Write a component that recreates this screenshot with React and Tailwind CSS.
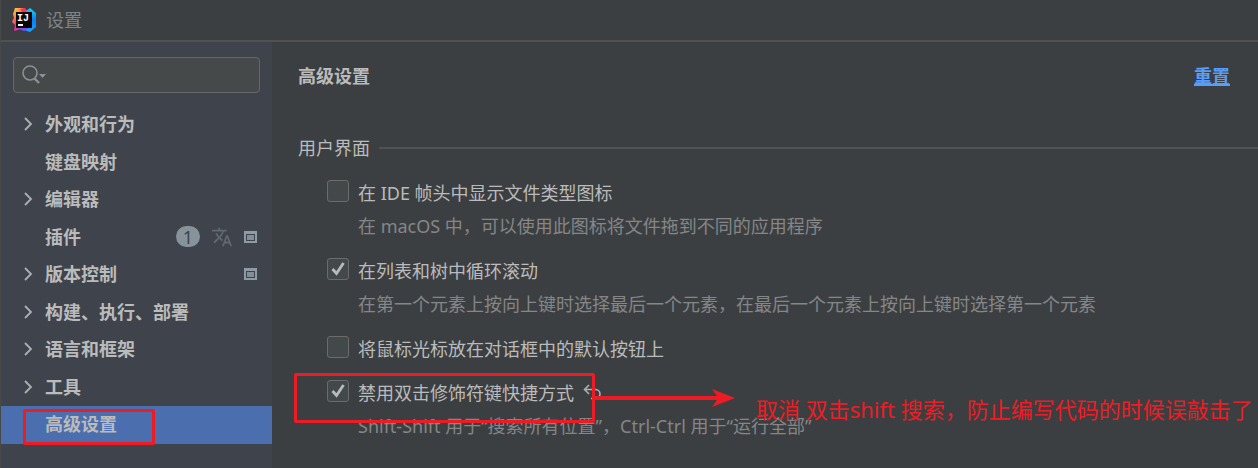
import React, { useState } from 'react';
import { MdTranslate } from 'react-icons/md';

const categories = [
  { name: '外观和行为', expandable: true },
  { name: '键盘映射' },
  { name: '编辑器', expandable: true },
  { name: '插件', updates: 1, translate: true, projectLevel: true },
  { name: '版本控制', expandable: true, projectLevel: true },
  { name: '构建、执行、部署', expandable: true },
  { name: '语言和框架', expandable: true },
  { name: '工具', expandable: true },
  { name: '高级设置', marked: true },
];

const options = [
  {
    id: 'frame-icon',
    label: '在 IDE 帧头中显示文件类型图标',
    hint: '在 macOS 中，可以使用此图标将文件拖到不同的应用程序',
  },
  {
    id: 'cyclic-scroll',
    label: '在列表和树中循环滚动',
    hint: '在第一个元素上按向上键时选择最后一个元素，在最后一个元素上按向上键时选择第一个元素',
  },
  { id: 'default-button', label: '将鼠标光标放在对话框中的默认按钮上' },
  {
    id: 'double-shift',
    label: '禁用双击修饰符键快捷方式',
    hint: 'Shift-Shift 用于“搜索所有位置”，Ctrl-Ctrl 用于“运行全部”',
    note: '取消 双击shift 搜索，防止编写代码的时候误敲击了',
  },
];

const Logo = () => (
  <svg width="24" height="24" viewBox="0 0 24 24" aria-hidden="true">
    <defs>
      <linearGradient id="warm" x1="0" y1="0" x2="0.6" y2="1">
        <stop offset="0" stopColor="#fdd835" />
        <stop offset="0.35" stopColor="#ff8a50" />
        <stop offset="0.65" stopColor="#fe2d78" />
        <stop offset="1" stopColor="#c33bd8" />
      </linearGradient>
      <linearGradient id="cool" x1="0" y1="0" x2="0" y2="1">
        <stop offset="0" stopColor="#14d4f4" />
        <stop offset="0.5" stopColor="#0b7cf5" />
        <stop offset="1" stopColor="#19a3ff" />
      </linearGradient>
    </defs>
    <path d="M3 0h8l3 4v16l-5 1-7 2 1-6-3-3 2-4-1-4z" fill="url(#warm)" />
    <path d="M8 1l5-1 3 4-4 3z" fill="#fe2d63" />
    <path d="M14 3l4-3 6 5v14l-6 5-9-3 7-3z" fill="url(#cool)" />
    <path d="M5 20l9-3 2 4-4 2z" fill="#7b4df5" />
    <rect x="4" y="4" width="16" height="16" fill="#0b0507" />
    <rect x="6" y="16" width="5" height="2" fill="#fff" />
    <text x="5" y="13" fill="#fff" fontFamily="Liberation Mono, monospace" fontWeight="700" fontSize="10">
      IJ
    </text>
  </svg>
);

const SearchIcon = () => (
  <svg width="26" height="20" viewBox="0 0 26 20" fill="none" aria-hidden="true">
    <circle cx="8" cy="8" r="7" stroke="#87929a" strokeWidth="1.6" />
    <path d="M12 13l5 5" stroke="#87929a" strokeWidth="2.4" />
    <path d="M17 9h7l-3.500 4z" fill="#87929a" />
  </svg>
);

const Chevron = () => (
  <svg width="9" height="14" viewBox="0 0 9 14" fill="none" aria-hidden="true">
    <path d="M1 1l6 6-6 6" stroke="#adb0b2" strokeWidth="1.8" />
  </svg>
);

const ProjectIcon = () => (
  <svg width="13" height="12" viewBox="0 0 13 12" aria-hidden="true">
    <path d="M0 0h13v12H0zM2 3v7h9V3z" fill="#8f9ba3" fillRule="evenodd" />
    <rect x="3" y="4" width="7" height="5" fill="#8f9ba3" opacity="0.85" />
  </svg>
);

const Category = ({ item, selected, onSelect }) => (
  <li className="relative h-[38px] even:h-[37px]">
    <button
      type="button"
      onClick={onSelect}
      className={`flex h-full w-full items-center pb-[2px] pl-[23px] pr-[15px] text-left font-bold ${
        selected ? 'bg-[#4b6eaf]' : ''
      }`}
    >
      <span className="w-[21px] shrink-0">{item.expandable && <Chevron />}</span>
      <span className="flex-1">{item.name}</span>
      <span className="flex items-center gap-[11px] font-normal">
        {item.updates && (
          <span className="flex h-[21px] w-6 items-center justify-center rounded-full bg-[#87939a] text-[#3f434c]">
            {item.updates}
          </span>
        )}
        {item.translate && <MdTranslate size={22} className="text-[#626970]" />}
        {item.projectLevel && <ProjectIcon />}
      </span>
    </button>
    {item.marked && (
      <span className="pointer-events-none absolute left-[22px] top-[3px] h-9 w-[132px] rounded-xs border-3 border-[#ed1c24]" />
    )}
  </li>
);

const Option = ({ option, checked, onToggle, onRevert }) => (
  <div className="relative">
    <div className="flex h-[34px] items-start pt-1">
      <span className="mr-[9px] grid size-[22px] shrink-0">
        <input
          id={option.id}
          type="checkbox"
          checked={checked}
          onChange={onToggle}
          className="col-start-1 row-start-1 size-[22px] appearance-none rounded-[3px] border border-[#6b6b6b] bg-[#43494a]"
        />
        {checked && (
          <svg viewBox="0 0 22 22" fill="none" className="pointer-events-none col-start-1 row-start-1 size-[22px]">
            <path d="M5.500 11l4 4.500L16.500 5" stroke="#b8bbbc" strokeWidth="2.800" />
          </svg>
        )}
      </span>
      <label htmlFor={option.id} className="whitespace-nowrap pt-px">
        {option.label}
      </label>
      {option.note && (
        <button type="button" aria-label="还原" onClick={onRevert} className="ml-[9px] mt-1">
          <svg width="20" height="16" viewBox="0 0 20 16" fill="none">
            <path d="M6 1L1.500 5.500 6 10M2 5.500h10.500a4.500 4.500 0 0 1 0 9H8" stroke="#adb0b2" strokeWidth="1.600" />
          </svg>
        </button>
      )}
    </div>
    {option.hint && (
      <p className="flex h-[34px] items-center whitespace-nowrap pb-[2px] pl-[31px] text-[#858687]">{option.hint}</p>
    )}
    {option.note && (
      <div className="pointer-events-none absolute -left-[33px] -top-[3px] flex items-start text-[#ed1c24]">
        <span className="h-[50px] w-[301px] shrink-0 rounded-xs border-3 border-[#ed1c24]" />
        <svg width="141" height="18" viewBox="0 0 141 18" fill="#ed1c24" className="mt-4 shrink-0">
          <path d="M0 7h122L117 0l23 9-23 9 5-7H0z" />
        </svg>
        <span className="ml-5 mt-5 whitespace-nowrap text-[22px] leading-8">{option.note}</span>
      </div>
    )}
  </div>
);

const defaults = { 'cyclic-scroll': true, 'double-shift': true };

const App = () => {
  const [selected, setSelected] = useState('高级设置');
  const [values, setValues] = useState(defaults);

  const toggle = (id) => setValues((prev) => ({ ...prev, [id]: !prev[id] }));

  return (
    <div className="flex min-h-screen flex-col overflow-hidden border-l border-[#48494a] bg-[#3c3f41] font-['Noto_Sans','Noto_Sans_CJK_SC',sans-serif] text-[18px] leading-6 text-[#bbbbbb]">
      <header className="flex h-[42px] items-center gap-[10px] border-b-2 border-[#515151] pl-[11px]">
        <Logo />
        <h1 className="text-[#818384]">设置</h1>
      </header>

      <div className="flex flex-1">
        <nav className="w-[271px] shrink-0 bg-[#3f434c]">
          <div className="mx-3 mb-[13px] mt-[15px] flex h-9 items-center rounded-[4px] border border-[#666767] bg-[#45494a] pl-2">
            <SearchIcon />
            <input
              type="text"
              aria-label="搜索"
              className="min-w-0 flex-1 bg-transparent px-1 outline-none"
            />
          </div>
          <ul>
            {categories.map((item) => (
              <Category
                key={item.name}
                item={item}
                selected={item.name === selected}
                onSelect={() => setSelected(item.name)}
              />
            ))}
          </ul>
        </nav>

        <main className="min-w-0 flex-1 pl-[26px] pt-[22px]">
          <div className="flex items-center justify-between pr-7 font-bold">
            <h2>高级设置</h2>
            <a
              href="#reset"
              onClick={() => setValues(defaults)}
              className="text-[#589df6] underline decoration-2 underline-offset-1"
            >
              重置
            </a>
          </div>

          <section className="mt-12">
            <div className="flex items-center gap-[9px]">
              <h3>用户界面</h3>
              <span className="h-[2px] flex-1 bg-[#515151]" />
            </div>
            <div className="mt-4 flex flex-col gap-[10px] pl-[29px]">
              {options.map((option) => (
                <Option
                  key={option.id}
                  option={option}
                  checked={!!values[option.id]}
                  onToggle={() => toggle(option.id)}
                  onRevert={() => toggle(option.id)}
                />
              ))}
            </div>
          </section>
        </main>
      </div>
    </div>
  );
};

export default App;
